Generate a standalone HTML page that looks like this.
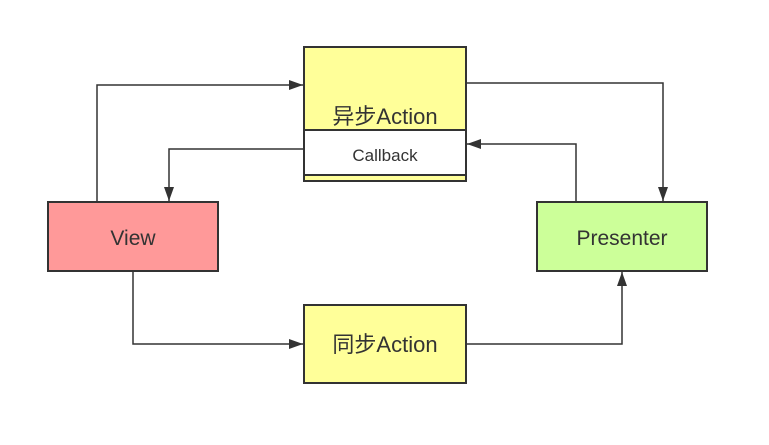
<!DOCTYPE html>
<html><head><style>
html,body{margin:0;padding:0;background:#fff;}
svg{display:block;}
text{font-family:"Liberation Sans","Noto Sans CJK SC",sans-serif;fill:#333;}
</style></head><body>
<svg width="769" height="445" viewBox="0 0 769 445">
<defs>
<marker id="a" markerWidth="14" markerHeight="10" refX="14" refY="5" orient="auto" markerUnits="userSpaceOnUse">
<path d="M0,0 L14,5 L0,10 Z" fill="#333"/>
</marker>
</defs>
<g fill="none" stroke="#333" stroke-width="1.5">
<polyline points="97,202 97,85 303,85" marker-end="url(#a)"/>
<polyline points="304,149 169,149 169,201" marker-end="url(#a)"/>
<polyline points="467,83 663,83 663,201" marker-end="url(#a)"/>
<polyline points="576,202 576,144 467,144" marker-end="url(#a)"/>
<polyline points="133,271 133,344 303,344" marker-end="url(#a)"/>
<polyline points="467,344 622,344 622,272" marker-end="url(#a)"/>
</g>
<g stroke="#333" stroke-width="2">
<rect x="304" y="47" width="162" height="134" fill="#ffff99"/>
<rect x="304" y="130" width="162" height="45" fill="#fff"/>
<rect x="48" y="202" width="170" height="69" fill="#ff9999"/>
<rect x="537" y="202" width="170" height="69" fill="#ccff99"/>
<rect x="304" y="305" width="162" height="78" fill="#ffff99"/>
</g>
<text x="385" y="124" font-size="22" text-anchor="middle">异步Action</text>
<text x="385" y="161" font-size="17" text-anchor="middle">Callback</text>
<text x="133" y="245" font-size="21" text-anchor="middle">View</text>
<text x="622" y="245" font-size="21" text-anchor="middle">Presenter</text>
<text x="385" y="352" font-size="22" text-anchor="middle">同步Action</text>
</svg>
</body></html>
